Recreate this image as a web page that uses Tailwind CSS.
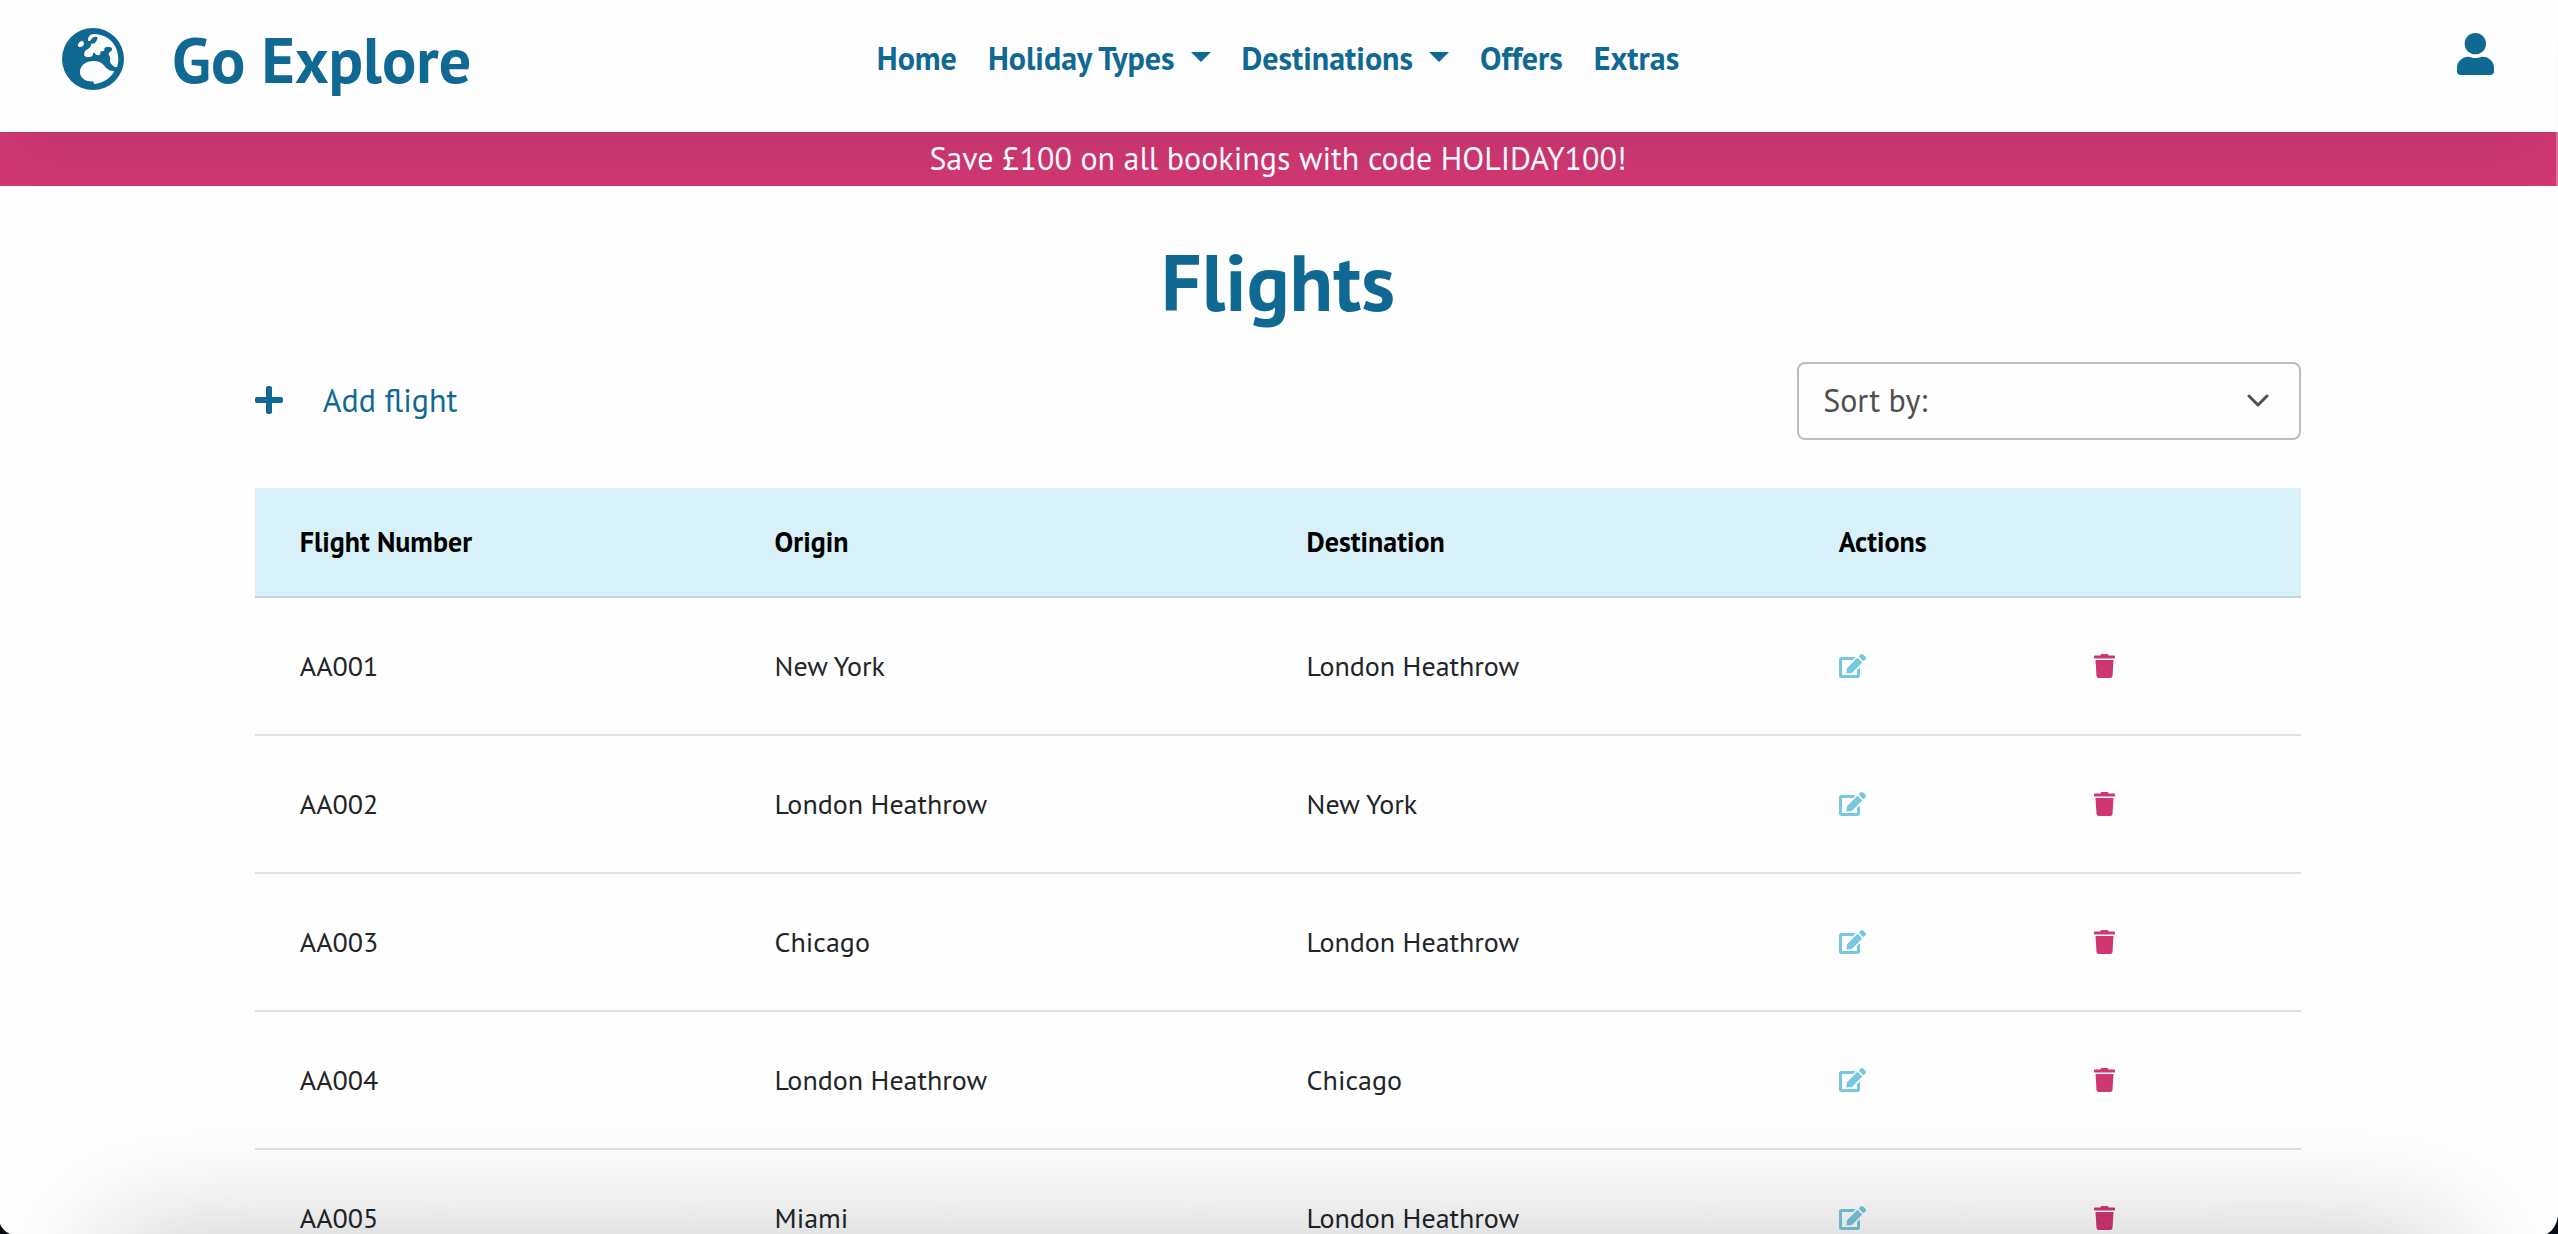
<!DOCTYPE html>
<html lang="en">
<head>
<meta charset="utf-8">
<title>Go Explore – Flights</title>
<script src="https://cdn.jsdelivr.net/npm/@tailwindcss/browser@4"></script>
</head>
<body class="h-screen overflow-hidden bg-[#fefefe] font-['PT_Sans','Noto_Sans',sans-serif] text-[#212529]">
<svg class="hidden" aria-hidden="true">
  <symbol id="edit" viewBox="0 0 576 512"><path fill="currentColor" d="M402.6 83.2l90.2 90.2c3.8 3.8 3.8 10 0 13.8L274.4 405.6l-92.8 10.3c-12.4 1.4-22.9-9.1-21.5-21.5l10.3-92.8L388.8 83.2c3.8-3.8 10-3.8 13.8 0zm162-22.9l-48.8-48.8c-15.2-15.2-39.9-15.2-55.2 0l-35.4 35.4c-3.8 3.8-3.8 10 0 13.8l90.2 90.2c3.8 3.8 10 3.8 13.8 0l35.4-35.4c15.2-15.3 15.2-40 0-55.2zM384 346.2V448H64V128h229.8c3.2 0 6.2-1.3 8.5-3.5l40-40c7.6-7.6 2.2-20.5-8.5-20.5H48C21.5 64 0 85.5 0 112v352c0 26.5 21.5 48 48 48h352c26.5 0 48-21.5 48-48V306.2c0-10.7-12.9-16-20.5-8.5l-40 40c-2.2 2.3-3.5 5.3-3.5 8.5z"/></symbol>
  <symbol id="trash" viewBox="0 0 448 512"><path fill="currentColor" d="M432 32H312l-9.4-18.7A24 24 0 0 0 281.1 0H166.8a23.72 23.72 0 0 0-21.4 13.3L136 32H16A16 16 0 0 0 0 48v32a16 16 0 0 0 16 16h416a16 16 0 0 0 16-16V48a16 16 0 0 0-16-16zM53.2 467a48 48 0 0 0 47.9 45h245.8a48 48 0 0 0 47.9-45L416 128H32z"/></symbol>
</svg>

<div class="h-full overflow-y-auto [scrollbar-width:none]">
  <header class="relative mr-0.5 grid grid-cols-[1fr_auto_1fr] items-center bg-[#fefefe] px-[62px] pt-1 pb-4 text-[#0f6992] shadow-[0_30px_60px_-20px_rgba(0,0,0,0.09)]">
    <a href="#" class="flex items-center gap-12">
      <svg class="mb-0.5 size-[62px]" viewBox="0 0 186 186" aria-hidden="true">
        <circle cx="93" cy="93" r="93" fill="#0f6992"/>
        <g fill="#fefefe">
          <path d="M79 29C82 21 89 18 98 18C140 20 169 52 169 93C169 101 168 110 165 117C161 117 157 117 154 114C149 110 146 106 144 101C144 95 146 90 143 84C141 81 138 79 141 75C144 70 150 71 150 64C150 59 147 57 141 57C134 57 127 57 127 64C128 70 122 70 117 70C113 71 116 76 115 79C112 82 106 82 102 80C99 78 98 73 94 75C92 77 94 80 91 83C88 87 79 88 73 87C65 85 65 77 69 70C72 64 78 64 82 60C85 56 89 51 87 47C95 48 101 44 103 39C106 34 109 29 104 27C99 25 92 28 89 32C86 37 84 40 79 39C77 36 78 32 79 29Z"/>
          <path d="M48 50C49 44 55 39 60 39C65 40 67 45 65 50C62 56 56 58 51 56C49 55 47 53 48 50Z"/>
          <path d="M54 132C54 112 72 99 94 99C108 99 118 103 125 111C130 118 137 125 146 128C151 128 153 128 157 130C146 151 124 165 99 168C95 168 95 165 94 160C83 161 70 159 62 151C57 146 54 140 54 132Z"/>
        </g>
      </svg>
      <span class="text-[64px] leading-[112px] font-bold whitespace-nowrap">Go Explore</span>
    </a>
    <nav class="flex items-center gap-[31px] pb-1 text-[32px] leading-[48px] font-bold whitespace-nowrap">
      <a href="#">Home</a>
      <button type="button" class="flex items-center gap-4" aria-haspopup="true">Holiday Types
        <svg class="mb-0.5 h-[10px] w-5" viewBox="0 0 20 10" aria-hidden="true"><path fill="currentColor" d="M0 0H20L10 10Z"/></svg>
      </button>
      <button type="button" class="flex items-center gap-4" aria-haspopup="true">Destinations
        <svg class="mb-0.5 h-[10px] w-5" viewBox="0 0 20 10" aria-hidden="true"><path fill="currentColor" d="M0 0H20L10 10Z"/></svg>
      </button>
      <a href="#">Offers</a>
      <a href="#">Extras</a>
    </nav>
    <a href="#" aria-label="Account" class="justify-self-end pb-3">
      <svg class="h-[42px] w-[37px]" viewBox="0 0 111 126" aria-hidden="true"><circle cx="55" cy="32" r="32" fill="currentColor"/><path fill="currentColor" d="M12 126Q0 126 0 114V105Q0 90 10 81Q20 71 34 71C40 71 46 75 55 75S71 71 77 71Q91 71 101 81Q111 90 111 105V114Q111 126 99 126Z"/></svg>
    </a>
  </header>

  <p class="border-r-2 border-white/30 bg-[#cf3773] pt-0.5 pb-1 text-center text-[32px] leading-[48px] text-white">Save £100 on all bookings with code HOLIDAY100!</p>

  <div class="mr-0.5">
    <main class="mx-auto w-[80vw] pt-12">
      <h1 class="text-center text-[80px] leading-[96px] font-bold text-[#0f6992]">Flights</h1>

      <div class="mt-8 flex items-center justify-between text-[32px] leading-[48px]">
        <a href="#" class="flex items-center gap-10 pb-0.5 text-[#0f6992]">
          <svg class="h-8 w-7" viewBox="0 0 448 512" aria-hidden="true"><path fill="currentColor" d="M416 208H272V64c0-17.670-14.330-32-32-32h-32c-17.670 0-32 14.330-32 32v144H32c-17.670 0-32 14.330-32 32v32c0 17.670 14.330 32 32 32h144v144c0 17.670 14.330 32 32 32h32c17.670 0 32-14.330 32-32V304h144c17.670 0 32-14.330 32-32v-32c0-17.670-14.330-32-32-32z"/></svg>
          Add flight
        </a>
        <div class="relative w-[504px]">
          <select aria-label="Sort by" class="block h-[78px] w-full appearance-none rounded-lg border-2 border-[#bdbdbd] bg-[#fefefe] px-6 pb-0.5 text-[#4f4f4f]">
            <option>Sort by:</option>
            <option>Flight Number</option>
            <option>Origin</option>
            <option>Destination</option>
          </select>
          <svg class="pointer-events-none absolute top-8 right-8 h-[14px] w-[22px]" viewBox="0 0 22 14" fill="none" stroke="#4f4f4f" stroke-width="3" stroke-linecap="round" stroke-linejoin="round" aria-hidden="true"><path d="M2 2L11 11L20 2"/></svg>
        </div>
      </div>

      <table class="mt-12 w-full table-fixed text-left text-[28px] leading-[44px]">
        <colgroup><col class="w-[23.200%]"><col class="w-[26%]"><col class="w-[26%]"><col class="w-[12.500%]"><col></colgroup>
        <thead class="bg-[#d8f1f8] text-black">
          <tr class="h-[109px] border-b-2 border-[#c3d6e0]">
            <th class="pl-[45px] font-bold">Flight Number</th>
            <th class="pl-[45px] font-bold">Origin</th>
            <th class="pl-[45px] font-bold">Destination</th>
            <th class="pl-[45px] font-bold" colspan="2">Actions</th>
          </tr>
        </thead>
        <tbody id="rows"></tbody>
      </table>
    </main>
  </div>
</div>

<!-- Shadow cast upwards from the dock, and the rounded window corners -->
<div class="pointer-events-none fixed inset-x-[110px] top-full h-40 shadow-[0_4px_120px_rgba(0,0,0,0.23)]"></div>
<svg class="pointer-events-none fixed bottom-0 left-0 h-[10px] w-[10px]" viewBox="0 0 10 10" aria-hidden="true"><path fill="#050d14" d="M0 0Q3 7 10 10H0Z"/></svg>
<svg class="pointer-events-none fixed right-0 bottom-0 h-[18px] w-[11px]" viewBox="0 0 11 18" aria-hidden="true"><path fill="#050d14" d="M11 0V18H0Q9 13 11 0Z"/></svg>

<script>
const flights = [
  ['AA001', 'New York', 'London Heathrow'],
  ['AA002', 'London Heathrow', 'New York'],
  ['AA003', 'Chicago', 'London Heathrow'],
  ['AA004', 'London Heathrow', 'Chicago'],
  ['AA005', 'Miami', 'London Heathrow'],
];
document.getElementById('rows').innerHTML = flights.map(f => `
  <tr class="h-[138px] border-b-2 border-[#dee0e1]">
    ${f.map(v => `<td class="pl-[45px]">${v}</td>`).join('')}
    <td class="pl-[45px]"><button type="button" class="block text-[#75c8de]" aria-label="Edit ${f[0]}"><svg class="h-6 w-[27px]"><use href="#edit"/></svg></button></td>
    <td class="pl-[45px]"><button type="button" class="block text-[#cf3773]" aria-label="Delete ${f[0]}"><svg class="h-6 w-[21px]"><use href="#trash"/></svg></button></td>
  </tr>`).join('');
</script>
</body>
</html>
